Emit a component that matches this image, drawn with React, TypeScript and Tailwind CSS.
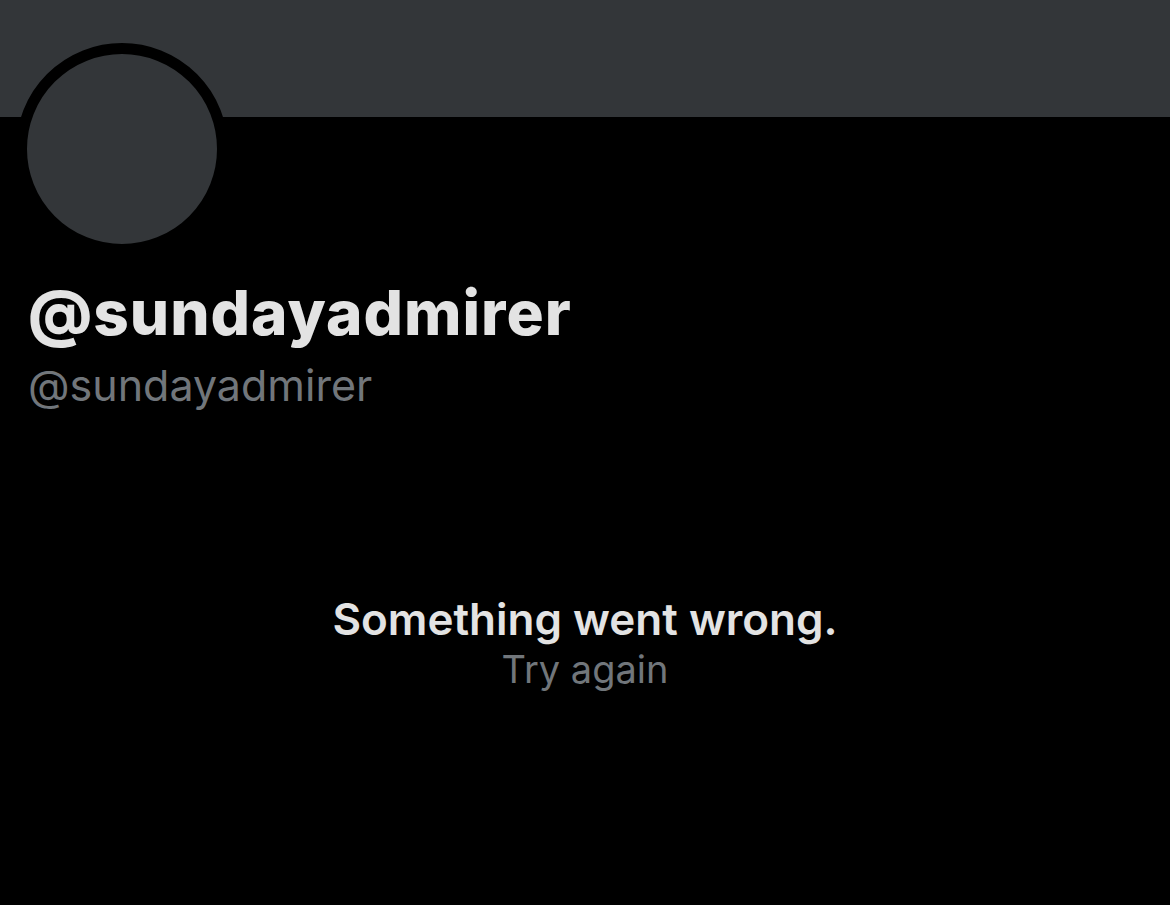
import React from 'react';

const App = () => {
  return (
    <div className="flex h-[905px] w-[1170px] flex-col overflow-hidden bg-black font-['Inter',sans-serif]">
      <div className="h-[117px] w-full shrink-0 bg-[#333639]" />
      <div className="-mt-[74px] ml-[16px] h-[212px] w-[212px] shrink-0 rounded-full border-[11px] border-black bg-[#333639]" />
      <div className="mt-[22px] flex flex-col pl-[28px]">
        <p className="text-[62px] leading-[72px] font-extrabold tracking-[1px] text-[#e3e3e3]">@sundayadmirer</p>
        <p className="mt-[12px] text-[43px] leading-[48px] text-[#71767b]">@sundayadmirer</p>
      </div>
      <div className="mt-[186px] flex flex-col items-center">
        <p className="text-[44px] leading-[48px] font-semibold text-[#e3e3e3]">Something went wrong.</p>
        <p className="mt-[4px] text-[38px] leading-[44px] text-[#71767b]">Try again</p>
      </div>
    </div>
  );
};

export default App;
